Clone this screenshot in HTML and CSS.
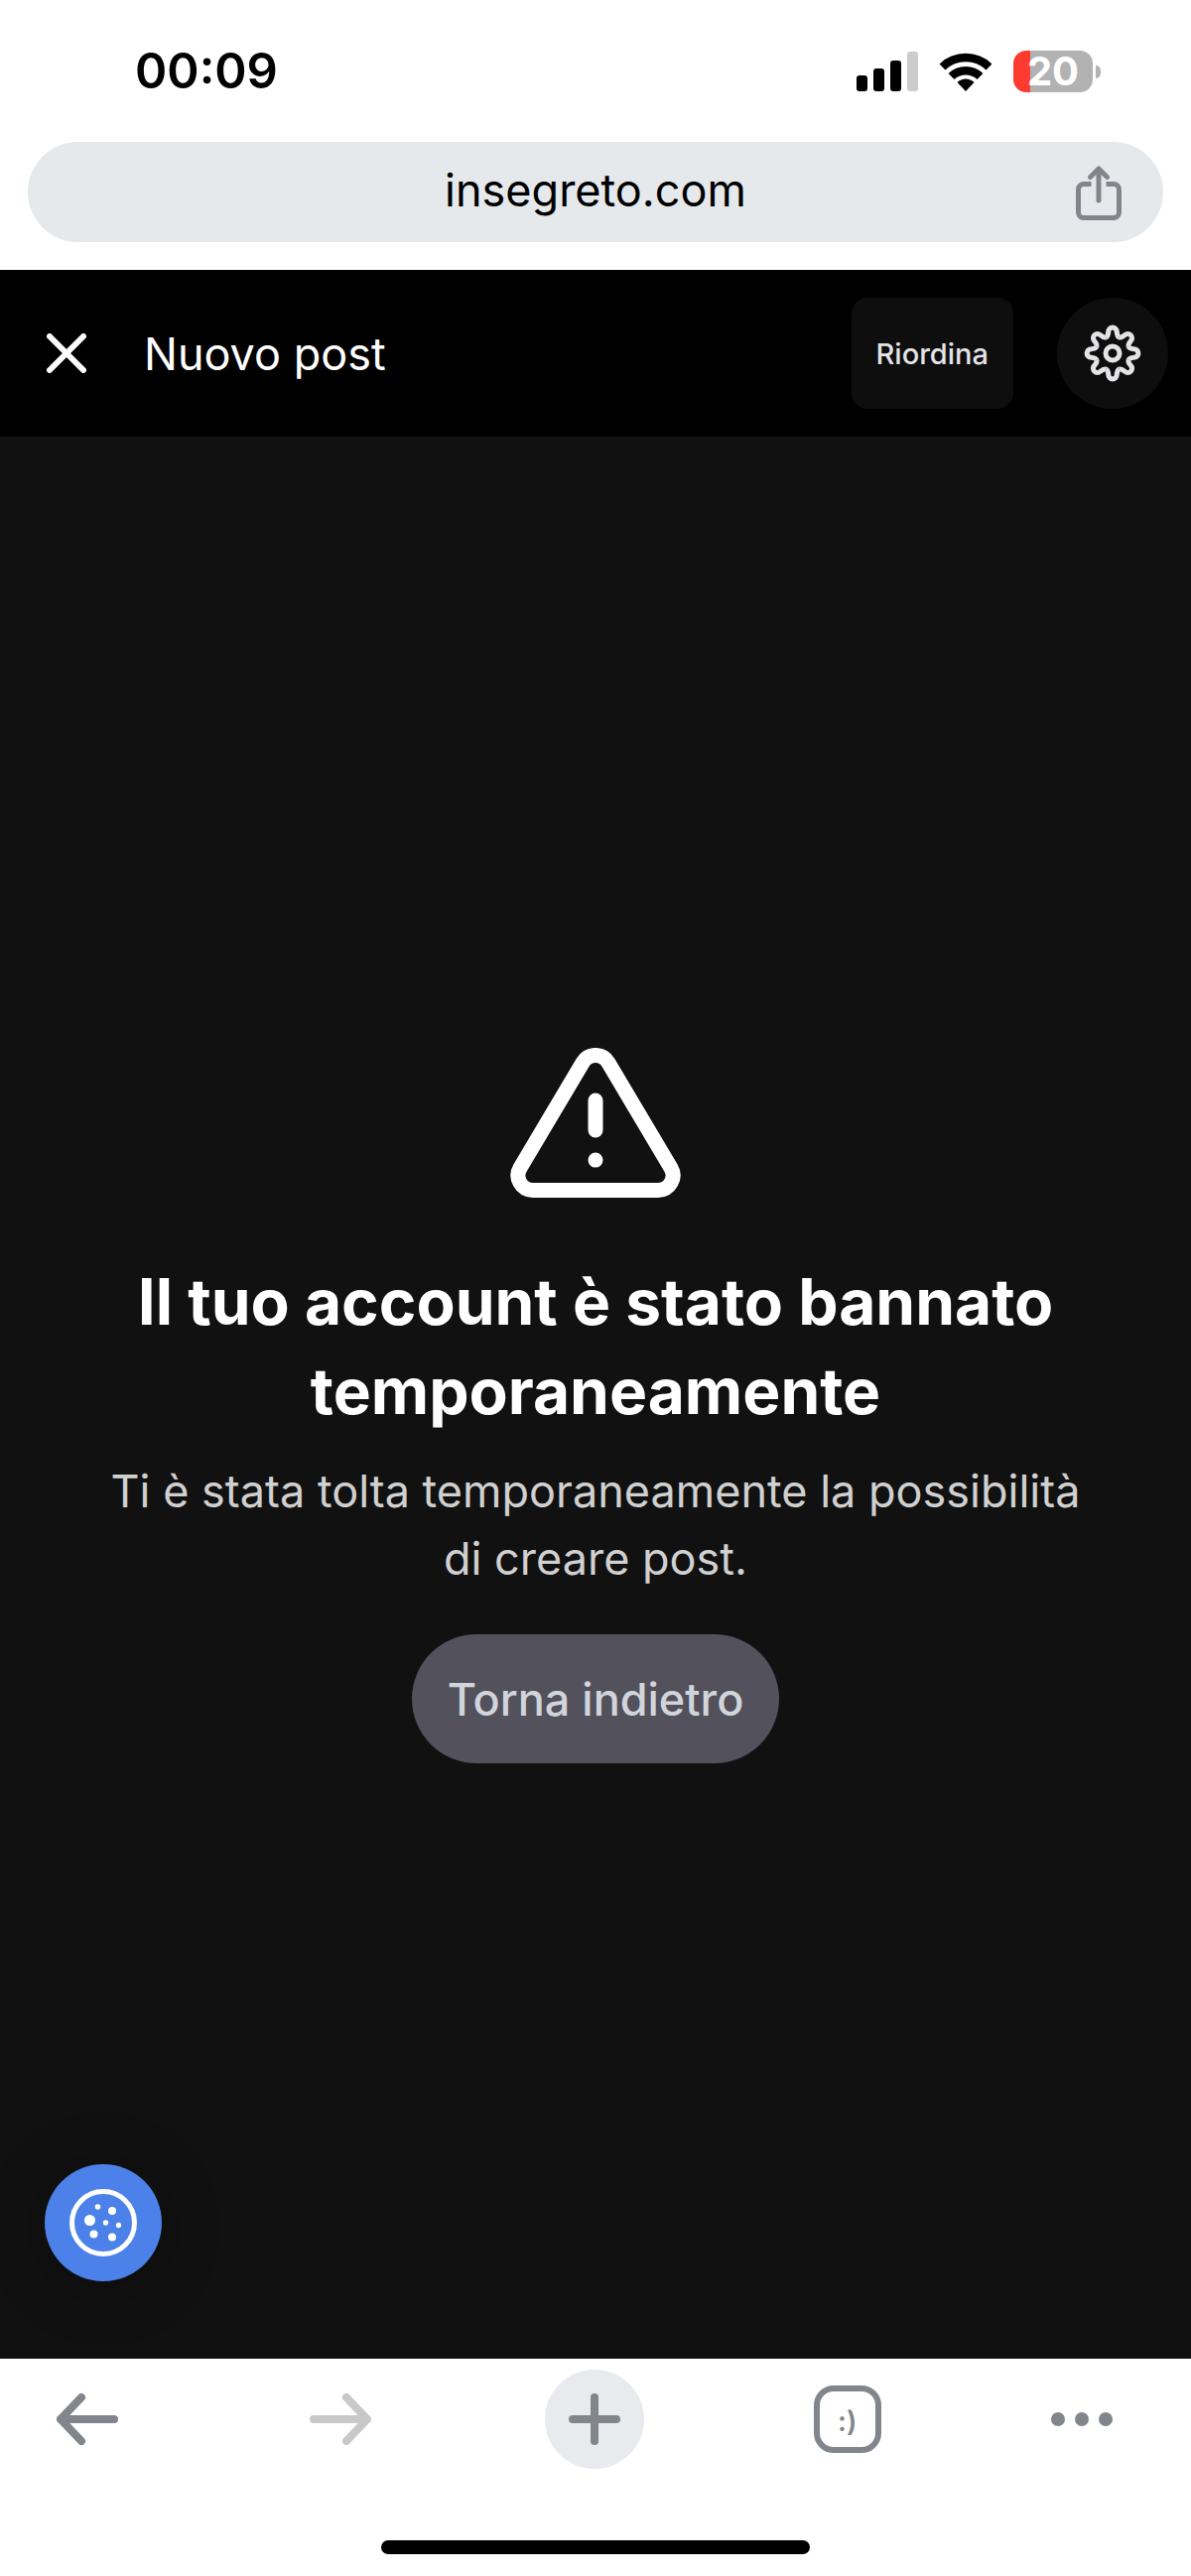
FILE: index.html
```html
<!DOCTYPE html>
<html lang="it">
<head>
    <title>Nuovo post</title>
    <meta charset="utf-8">
    <meta name="viewport" content="width=device-width, initial-scale=1">
    <link rel="stylesheet" href="styles.css">
</head>

<body>
    <!-- Barra di stato -->
    <div class="status">
        <span class="time">00:09</span>
        <div class="status-icons">
            <svg width="62" height="40" viewBox="0 0 62 40">
                <rect x="0" y="24" width="11" height="16" rx="3" />
                <rect x="17" y="17" width="11" height="23" rx="3" />
                <rect x="34" y="9" width="11" height="31" rx="3" />
                <rect x="51" y="0" width="11" height="40" rx="3" fill="#cccccc" />
            </svg>
            <svg width="54" height="40" viewBox="0 0 54 40">
                <path d="M3.5 15.5a34 34 0 0 1 47 0M12.5 25a21 21 0 0 1 29 0" fill="none" stroke="#000" stroke-width="8.5" />
                <path d="M27 40l-8.5-9a12 12 0 0 1 17 0z" />
            </svg>
            <div class="battery"><span>20</span></div>
        </div>
    </div>

    <!-- Barra degli indirizzi -->
    <div class="address">
        <span class="url">insegreto.com</span>
        <button class="share" aria-label="Condividi">
            <svg width="46" height="56" viewBox="0 0 46 56" fill="none" stroke="#80868b" stroke-width="5">
                <path d="M15.5 19.500H8a5.500 5.500 0 0 0-5.500 5.500v23a5.500 5.500 0 0 0 5.500 5.500h30a5.500 5.500 0 0 0 5.500-5.500V25a5.500 5.500 0 0 0-5.500-5.500h-7.500" />
                <path d="M23 36V4M14.500 12.500L23 4l8.500 8.500" stroke-linecap="round" stroke-linejoin="round" />
            </svg>
        </button>
    </div>

    <header class="topbar">
        <button class="close" aria-label="Chiudi">
            <svg width="40" height="40" viewBox="0 0 40 40" fill="none" stroke="#fff" stroke-width="6" stroke-linecap="round">
                <path d="M3 3l34 34M37 3L3 37" />
            </svg>
        </button>
        <h2>Nuovo post</h2>
        <button class="reorder">Riordina</button>
        <button class="settings" aria-label="Impostazioni">
            <svg width="58" height="58" viewBox="-29 -29 58 58" fill="none" stroke="#e4e4e7" stroke-width="5">
                <defs>
                    <path id="dente" d="M-6.700-16.100C-4.600-17-4.400-18.900-4.200-21.700A4.200 4.200 0 0 1 4.200-21.700C4.400-18.900 4.600-17 6.700-16.100" />
                </defs>
                <use href="#dente" />
                <use href="#dente" transform="rotate(45)" />
                <use href="#dente" transform="rotate(90)" />
                <use href="#dente" transform="rotate(135)" />
                <use href="#dente" transform="rotate(180)" />
                <use href="#dente" transform="rotate(225)" />
                <use href="#dente" transform="rotate(270)" />
                <use href="#dente" transform="rotate(315)" />
                <circle r="7" />
            </svg>
        </button>
    </header>

    <main class="content">
        <svg class="warning" width="172" height="151" viewBox="0 0 172 151" fill="none" stroke="#fff" stroke-width="15" stroke-linecap="round">
            <path d="M73.100 14.800L10.100 120.800A15 15 0 0 0 23 143.500H149A15 15 0 0 0 161.900 120.800L98.900 14.800A15 15 0 0 0 73.100 14.800z" />
            <path d="M86 53v30M86 113v.1" />
        </svg>
        <h1>Il tuo account è stato bannato temporaneamente</h1>
        <p>Ti è stata tolta temporaneamente la possibilità di creare post.</p>
        <button class="back">Torna indietro</button>

        <button class="cookie" aria-label="Cookie">
            <svg width="70" height="70" viewBox="-35 -35 70 70" fill="#fff">
                <circle r="31.5" fill="none" stroke="#fff" stroke-width="5" />
                <circle cx="-5.5" cy="-16" r="2.8" />
                <circle cx="9" cy="-12" r="4" />
                <circle cx="-13.5" cy="-2.5" r="5.5" />
                <circle cx="2.5" cy="0" r="2.7" />
                <circle cx="15.5" cy="2.5" r="2.7" />
                <circle cx="-9.5" cy="11.5" r="4" />
                <circle cx="9" cy="14.5" r="4" />
            </svg>
        </button>
    </main>

    <!-- Barra del browser -->
    <nav class="toolbar">
        <button aria-label="Indietro">
            <svg width="62" height="52" viewBox="0 0 62 52" fill="none" stroke="#80868b" stroke-width="8" stroke-linecap="round" stroke-linejoin="round">
                <path d="M58 26H4M25 4L4 26l21 22" />
            </svg>
        </button>
        <button aria-label="Avanti" disabled>
            <svg width="62" height="52" viewBox="0 0 62 52" fill="none" stroke="#c8c8c8" stroke-width="8" stroke-linecap="round" stroke-linejoin="round">
                <path d="M4 26h54M37 4l21 22-21 22" />
            </svg>
        </button>
        <button class="add" aria-label="Nuova scheda">
            <svg width="52" height="52" viewBox="0 0 52 52" fill="none" stroke="#80868b" stroke-width="8" stroke-linecap="round">
                <path d="M26 4v44M4 26h44" />
            </svg>
        </button>
        <button aria-label="Schede"><span class="tabs">:)</span></button>
        <button class="more" aria-label="Altro">
            <svg width="62" height="14" viewBox="0 0 62 14" fill="#80868b">
                <circle cx="7" cy="7" r="7" />
                <circle cx="31" cy="7" r="7" />
                <circle cx="55" cy="7" r="7" />
            </svg>
        </button>
    </nav>
    <div class="home"></div>
</body>

</html>
```

FILE: styles.css
```css
* {
    box-sizing: border-box;
}

body {
    margin: 0;
    min-height: 100vh;
    display: flex;
    flex-direction: column;
    background-color: #ffffff;
    font-family: Inter, "Liberation Sans", sans-serif;
}

button {
    display: flex;
    align-items: center;
    justify-content: center;
    padding: 0;
    border: none;
    background: none;
    font-family: inherit;
}

.status {
    display: flex;
    align-items: center;
    justify-content: space-between;
    height: 143px;
    padding: 0 91px 0 136px;
}

.time {
    font-size: 49px;
    font-weight: 600;
}

.status-icons {
    display: flex;
    align-items: center;
    gap: 21px;
}

.battery {
    position: relative;
    width: 80px;
    height: 42px;
    margin-right: 8px;
    border-radius: 13px;
    background: linear-gradient(to right, #ff3b30 17px, #b2b2b2 17px);
    color: #ffffff;
    font-size: 40px;
    font-weight: 700;
    line-height: 42px;
    text-align: center;
}

.battery::after {
    content: "";
    position: absolute;
    top: 15px;
    right: -8px;
    width: 5px;
    height: 13px;
    border-radius: 0 6px 6px 0;
    background-color: #b2b2b2;
}

.address {
    display: grid;
    grid-template-columns: 1fr auto 1fr;
    align-items: center;
    height: 101px;
    margin: 0 28px 28px;
    padding: 0 42px;
    border-radius: 51px;
    background-color: #e6e9ec;
}

.url {
    grid-column: 2;
    padding-bottom: 4px;
    font-size: 45px;
}

.share {
    justify-self: end;
}

.topbar {
    display: flex;
    align-items: center;
    height: 168px;
    padding: 0 23px;
    background-color: #000000;
}

.close {
    width: 88px;
    height: 112px;
}

.topbar h2 {
    flex: 1;
    margin: 0 0 0 34px;
    color: #ffffff;
    font-size: 45px;
    font-weight: 400;
}

.reorder {
    height: 112px;
    margin-right: 44px;
    padding: 0 25px;
    border-radius: 16px;
    background-color: #0e0e0e;
    color: #e4e4e7;
    font-size: 29px;
    font-weight: 500;
}

.settings {
    width: 112px;
    height: 112px;
    border-radius: 50%;
    background-color: #0e0e0e;
}

.content {
    position: relative;
    flex: 1;
    display: flex;
    flex-direction: column;
    align-items: center;
    justify-content: center;
    padding: 16px 90px 0;
    background-color: #111111;
    text-align: center;
}

.content h1 {
    margin: 60px 0 22px;
    color: #ffffff;
    font-size: 64px;
    font-weight: 700;
    line-height: 90px;
}

.content p {
    margin: 0 0 42px;
    color: #d0d0d0;
    font-size: 45px;
    line-height: 68px;
}

.back {
    height: 130px;
    padding: 0 36px;
    border-radius: 65px;
    background-color: #53515b;
    color: #d1d5db;
    font-size: 45px;
    font-weight: 500;
}

.cookie {
    position: absolute;
    left: 45px;
    bottom: 78px;
    width: 118px;
    height: 118px;
    border-radius: 50%;
    background-color: #4b81e8;
    box-shadow: 0 6px 60px rgba(0, 0, 0, 0.3);
}

.toolbar {
    display: flex;
    justify-content: space-between;
    padding: 11px 41px 0 38px;
}

.toolbar button {
    width: 100px;
    height: 100px;
}

.toolbar .add {
    border-radius: 50%;
    background-color: #e8eaed;
}

.toolbar .more {
    justify-content: flex-start;
}

.tabs {
    width: 68px;
    height: 68px;
    border: 6px solid #80868b;
    border-radius: 20px;
    color: #80868b;
    font-size: 28px;
    font-weight: 600;
    line-height: 60px;
}

.home {
    width: 36%;
    height: 14px;
    margin: 72px auto 22px;
    border-radius: 7px;
    background-color: #000000;
}
```
